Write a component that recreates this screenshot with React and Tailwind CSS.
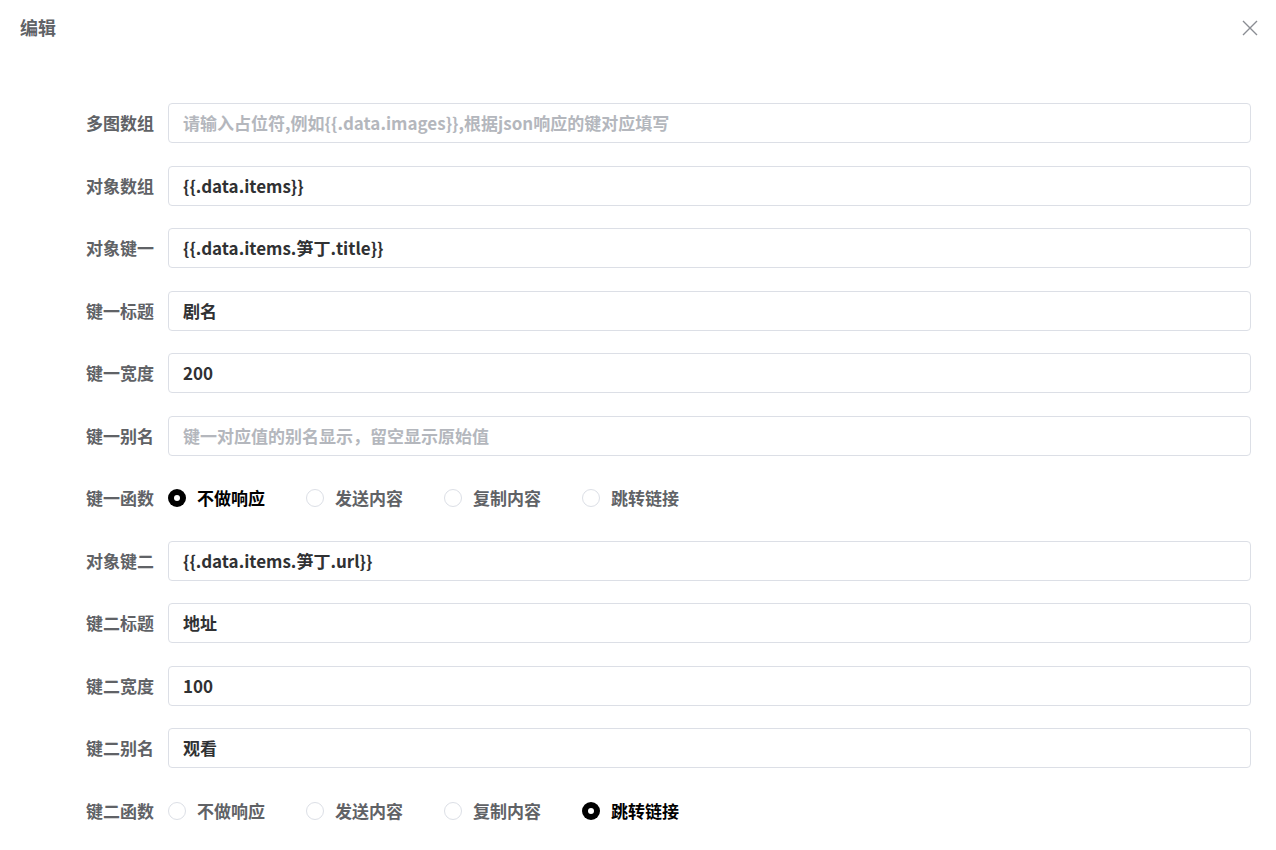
import React from "react";

const font = { fontFamily: '"Noto Sans CJK SC", "Noto Sans", sans-serif' };

const Field = ({ label, value, placeholder }) => (
  <div className="flex items-center h-10">
    <label className="w-[168px] pr-[14px] text-right text-[17px] font-bold text-[#606266] shrink-0">
      {label}
    </label>
    <div className="flex-1 h-10 border border-[#dcdfe6] rounded-[4px] flex items-center px-[14px]">
      {value ? (
        <span className="text-[17px] font-semibold text-[#303133]">{value}</span>
      ) : (
        <span className="text-[17px] font-semibold text-[#b4b7bd]">{placeholder}</span>
      )}
    </div>
  </div>
);

const Radio = ({ label, checked }) => (
  <div className="flex items-center w-[138px]">
    {checked ? (
      <span className="w-[18px] h-[18px] rounded-full bg-black flex items-center justify-center">
        <span className="w-[6px] h-[6px] rounded-full bg-white" />
      </span>
    ) : (
      <span className="w-[18px] h-[18px] rounded-full border border-[#dcdfe6] bg-white" />
    )}
    <span className={`ml-[11px] text-[17px] font-bold ${checked ? "text-black" : "text-[#606266]"}`}>
      {label}
    </span>
  </div>
);

const Radios = ({ label, sel }) => (
  <div className="flex items-center h-10">
    <label className="w-[168px] pr-[14px] text-right text-[17px] font-bold text-[#606266] shrink-0">
      {label}
    </label>
    {["不做响应", "发送内容", "复制内容", "跳转链接"].map((t, i) => (
      <Radio key={t} label={t} checked={i === sel} />
    ))}
  </div>
);

export default function App() {
  return (
    <div className="w-[1276px] h-[850px] bg-white relative" style={font}>
      <div className="flex items-center justify-between pl-5 pr-[17px] pt-[14px]">
        <h1 className="text-[18px] font-bold text-[#606266]">编辑</h1>
        <svg width="18" height="18" viewBox="0 0 18 18" className="text-[#8a8d93]">
          <path d="M2 2L16 16M16 2L2 16" stroke="currentColor" strokeWidth="1.4" />
        </svg>
      </div>
      <div className="flex flex-col gap-[22.5px] pr-[25px] mt-[62px]">
        <Field label="多图数组" placeholder="请输入占位符,例如{{.data.images}},根据json响应的键对应填写" />
        <Field label="对象数组" value="{{.data.items}}" />
        <Field label="对象键一" value="{{.data.items.笋丁.title}}" />
        <Field label="键一标题" value="剧名" />
        <Field label="键一宽度" value="200" />
        <Field label="键一别名" placeholder="键一对应值的别名显示，留空显示原始值" />
        <Radios label="键一函数" sel={0} />
        <Field label="对象键二" value="{{.data.items.笋丁.url}}" />
        <Field label="键二标题" value="地址" />
        <Field label="键二宽度" value="100" />
        <Field label="键二别名" value="观看" />
        <Radios label="键二函数" sel={3} />
      </div>
    </div>
  );
}
